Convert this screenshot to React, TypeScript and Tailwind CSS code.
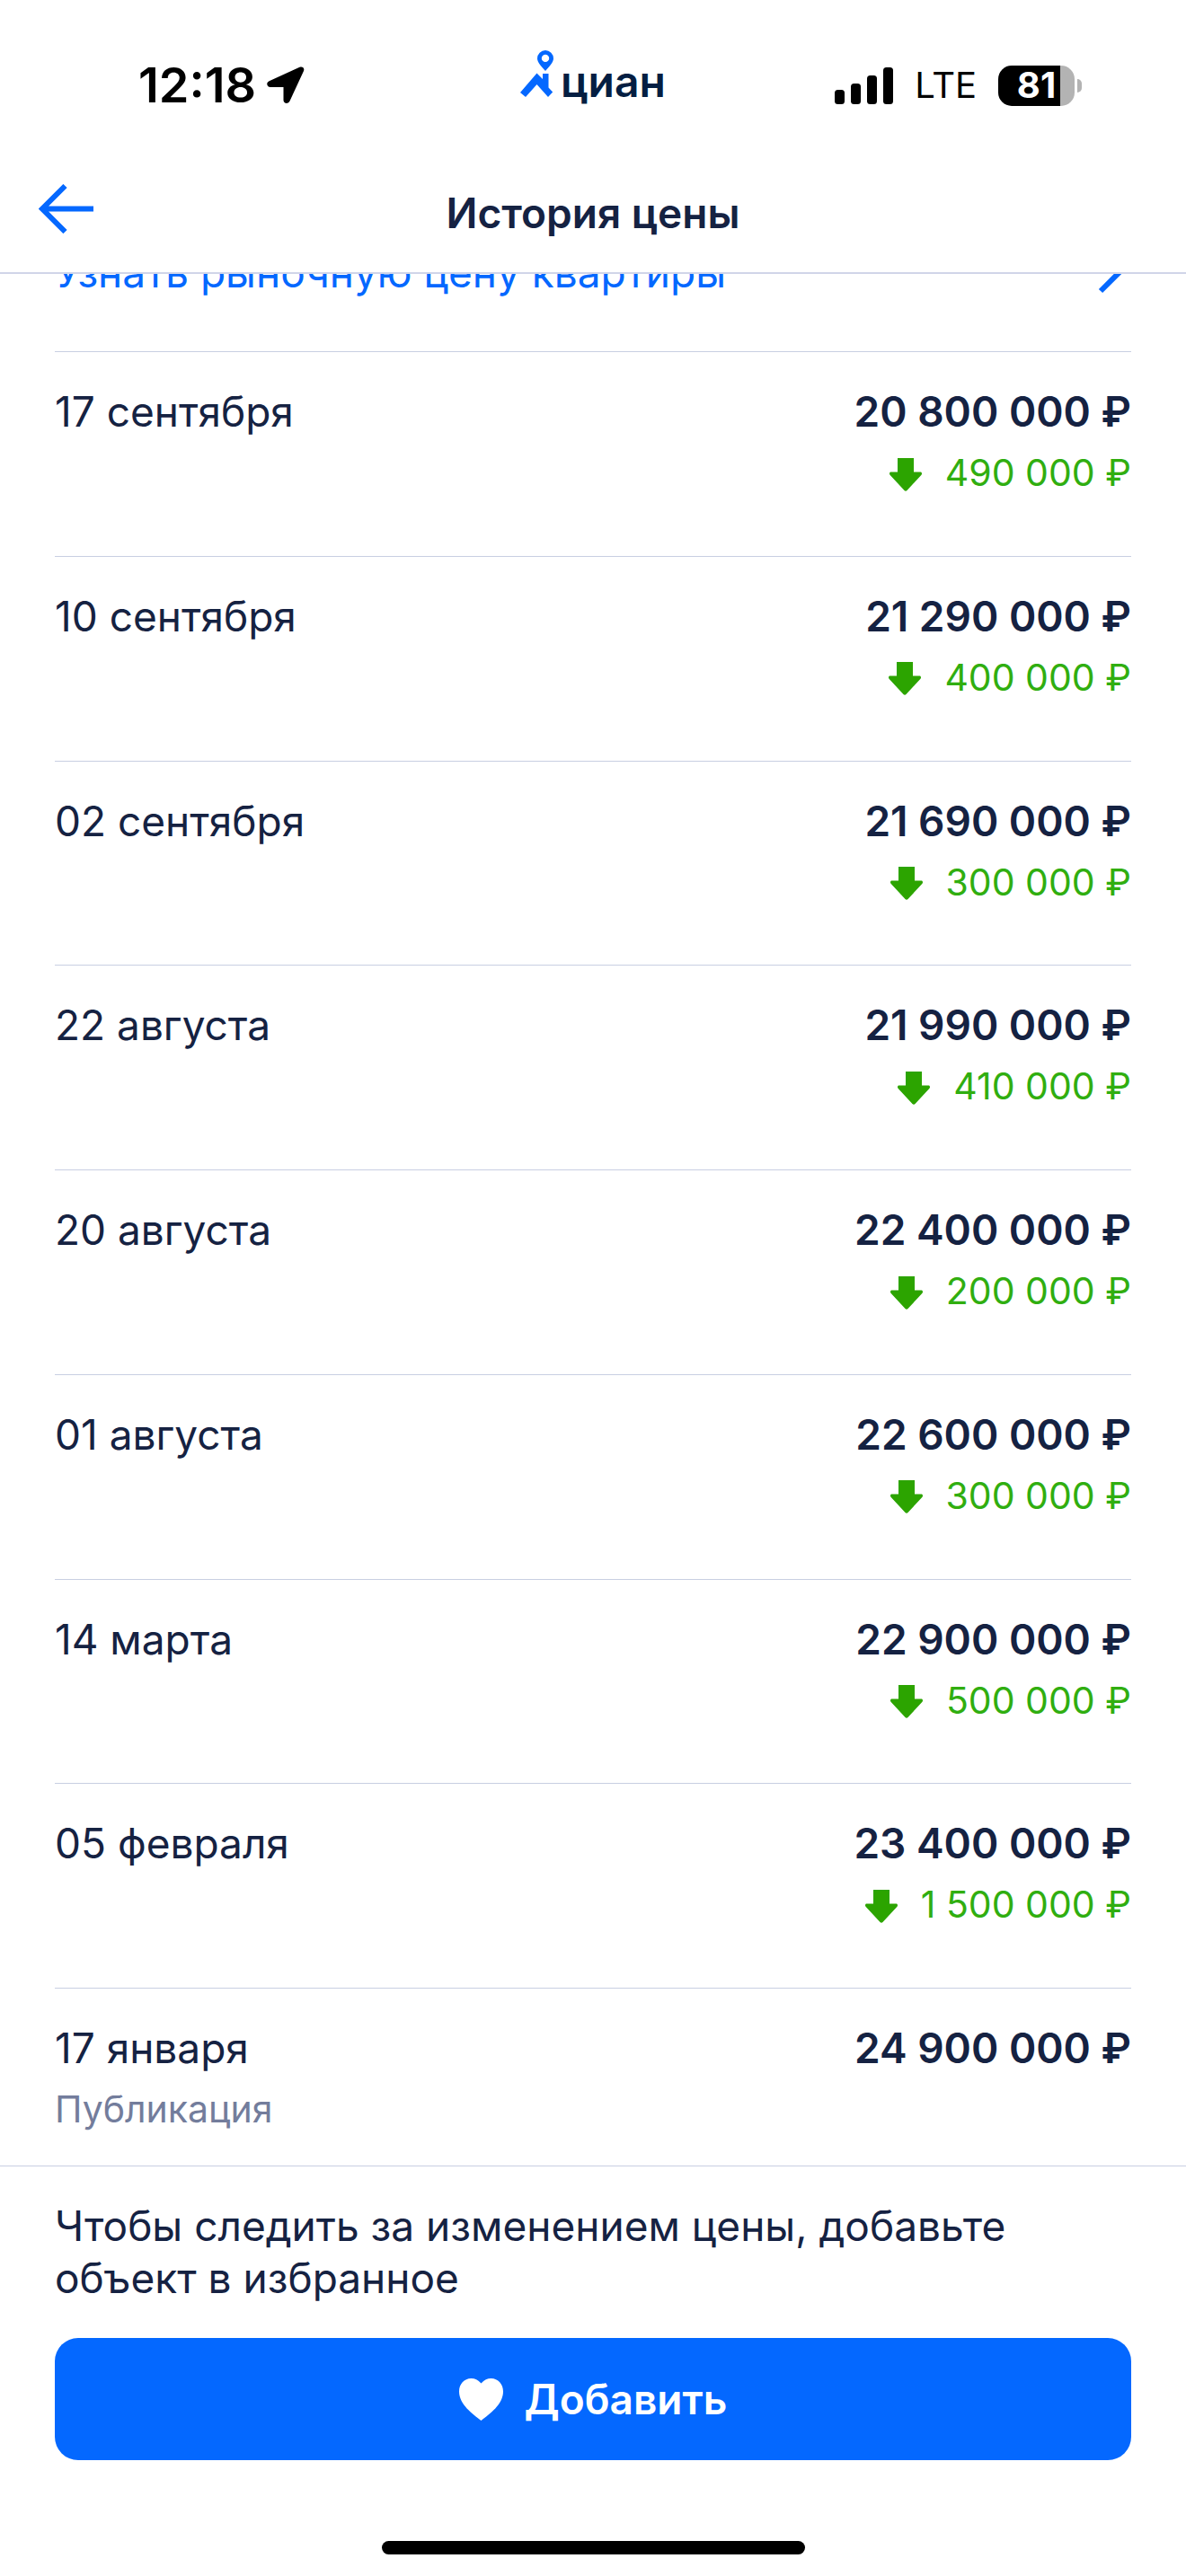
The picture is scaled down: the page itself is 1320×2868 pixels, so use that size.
import React, { useState } from 'react';

interface PriceEntry {
    date: string;
    price: string;
    drop?: string; // How much the price went down
    note?: string; // Small caption under the date
}

const history: PriceEntry[] = [
    { date: '17 сентября', price: '20 800 000 ₽', drop: '490 000 ₽' },
    { date: '10 сентября', price: '21 290 000 ₽', drop: '400 000 ₽' },
    { date: '02 сентября', price: '21 690 000 ₽', drop: '300 000 ₽' },
    { date: '22 августа', price: '21 990 000 ₽', drop: '410 000 ₽' },
    { date: '20 августа', price: '22 400 000 ₽', drop: '200 000 ₽' },
    { date: '01 августа', price: '22 600 000 ₽', drop: '300 000 ₽' },
    { date: '14 марта', price: '22 900 000 ₽', drop: '500 000 ₽' },
    { date: '05 февраля', price: '23 400 000 ₽', drop: '1 500 000 ₽' },
    { date: '17 января', price: '24 900 000 ₽', note: 'Публикация' },
];

const Logo: React.FC = () => (
    <div className="flex items-baseline gap-2 pb-5">
        <svg width="37" height="52" viewBox="0 0 37 52" fill="#0468ff" aria-hidden="true">
            <path
                fillRule="evenodd"
                d="M28 0a9 9 0 0 1 9 9c0 5-5 9-9 14c-4-5-9-9-9-14a9 9 0 0 1 9-9zm0 4.7a4.2 4.2 0 1 0 0 8.4a4.2 4.2 0 0 0 0-8.4z"
            />
            <path d="M18.500 25.500L25 32V26H31.500V41.500L36.200 46.500L31 52L18.500 38L6 52L0 47z" />
        </svg>
        <span className="text-[48px] leading-none font-semibold text-[#041e42]">циан</span>
    </div>
);

const StatusBar: React.FC = () => (
    <div className="grid grid-cols-[1fr_auto_1fr] items-center h-[170px] pt-5 text-black">
        <div className="flex items-center gap-3 pl-[154px]">
            <span className="text-[54px] leading-none font-semibold">12:18</span>
            <svg width="42" height="42" viewBox="0 0 42 42" aria-hidden="true">
                <path d="M36.500 .8C39.500-.6 42.300 1.800 41 5L25.500 38.500C24 42.300 18.500 41.500 18.500 37.500V23H4C0 23-1.300 18 2.600 16.200z" />
            </svg>
        </div>
        <Logo />
        <div className="flex items-center justify-end gap-6 pr-[116px]">
            <svg width="65" height="41" viewBox="0 0 65 41" aria-hidden="true">
                <rect y="25" width="11" height="16" rx="3.500" />
                <rect x="18" y="18" width="11" height="23" rx="3.500" />
                <rect x="36" y="9" width="11" height="32" rx="3.500" />
                <rect x="54" width="11" height="41" rx="3.500" />
            </svg>
            <span className="text-[40px] leading-none">LTE</span>
            <div className="flex items-center gap-[3px]">
                <div className="flex items-center justify-center w-[85px] h-[45px] rounded-[15px] bg-linear-to-r from-black from-81% to-[#b3b3b3] to-81% text-[40px] leading-none font-bold text-white">
                    81
                </div>
                <div className="w-[5px] h-[15px] rounded-r-full bg-[#b3b3b3]" />
            </div>
        </div>
    </div>
);

const Header: React.FC = () => (
    <header className="border-b-2 border-[#d0d5e8]">
        <StatusBar />
        <div className="grid grid-cols-[1fr_auto_1fr] items-center h-[133px]">
            <button type="button" aria-label="Назад" className="justify-self-start pl-[43px] pb-2">
                <svg width="61" height="55" viewBox="0 0 61 55" fill="none" stroke="#0468ff" strokeWidth="6" aria-hidden="true">
                    <path d="M29.500 2L4 27.500L29.500 53M5 27.500H61" />
                </svg>
            </button>
            <h1 className="text-[46px] leading-none font-semibold">История цены</h1>
        </div>
    </header>
);

const PriceRow: React.FC<{ entry: PriceEntry }> = ({ entry }) => (
    <li className={`flex justify-between border-t border-[#c8cfe2] pt-8 leading-[68px] ${entry.drop ? 'flex-1' : 'pb-[29px]'}`}>
        <div>
            <p className="text-[46px]">{entry.date}</p>
            {entry.note && <p className="text-[41px] text-[#737d9c]">{entry.note}</p>}
        </div>
        <div className="text-right">
            <p className="text-[46px] font-semibold">{entry.price}</p>
            {entry.drop && (
                <p className="flex items-center justify-end gap-[26px] text-[41px] text-[#30ae10]">
                    <svg width="36" height="37" viewBox="0 0 36 37" fill="#2ca400" className="mt-1" aria-hidden="true">
                        <path d="M9 0H27V15.500H34.500C36 15.500 36.500 17.500 35.500 18.800L19.500 36Q18 37.500 16.500 36L.5 18.800C-.5 17.500 0 15.500 1.500 15.500H9z" />
                    </svg>
                    {entry.drop}
                </p>
            )}
        </div>
    </li>
);

const App: React.FC = () => {
    const [added, setAdded] = useState(false);

    return (
        <div className="flex flex-col min-h-screen bg-white font-['Inter',sans-serif] text-[#152242]">
            <Header />

            <main className="flex flex-col flex-1 px-[61px]">
                {/* Scrolled half way under the header */}
                <div className="flex items-end h-[86px] overflow-hidden">
                    <a href="#market" className="flex flex-1 items-center justify-between pb-[54px] pr-2 text-[46px] leading-[68px] text-[#0468ff]">
                        Узнать рыночную цену квартиры
                        <svg width="30" height="48" viewBox="0 0 30 48" fill="none" stroke="currentColor" strokeWidth="6" aria-hidden="true">
                            <path d="M4 3L25 24L4 45" />
                        </svg>
                    </a>
                </div>

                <ul className="flex flex-col flex-1">
                    {history.map((entry) => (
                        <PriceRow key={entry.date} entry={entry} />
                    ))}
                </ul>
            </main>

            <footer className="border-t border-[#c8cfe2] pt-[37px] pb-6">
                <div className="px-[61px]">
                    <p className="text-[46px] leading-[58px]">
                        Чтобы следить за изменением цены, добавьте объект в избранное
                    </p>
                    <button
                        type="button"
                        aria-pressed={added}
                        onClick={() => setAdded(!added)}
                        className="flex items-center justify-center gap-6 w-full h-[136px] mt-[38px] rounded-[26px] bg-[#0468ff] text-[46px] font-semibold text-white"
                    >
                        <svg width="49" height="47" viewBox="0 0 49 47" fill="currentColor" aria-hidden="true">
                            <path d="M24.500 5.500C28 1.500 31.500 0 35.500 0C43.500 0 49 6.500 49 14.500C49 29 34 39.500 24.500 47C15 39.500 0 29 0 14.500C0 6.500 5.500 0 13.500 0C17.500 0 21 1.500 24.500 5.500z" />
                        </svg>
                        Добавить
                    </button>
                </div>
                <div className="w-[471px] h-[15px] mx-auto mt-[90px] rounded-full bg-black" />
            </footer>
        </div>
    );
};

export default App;
